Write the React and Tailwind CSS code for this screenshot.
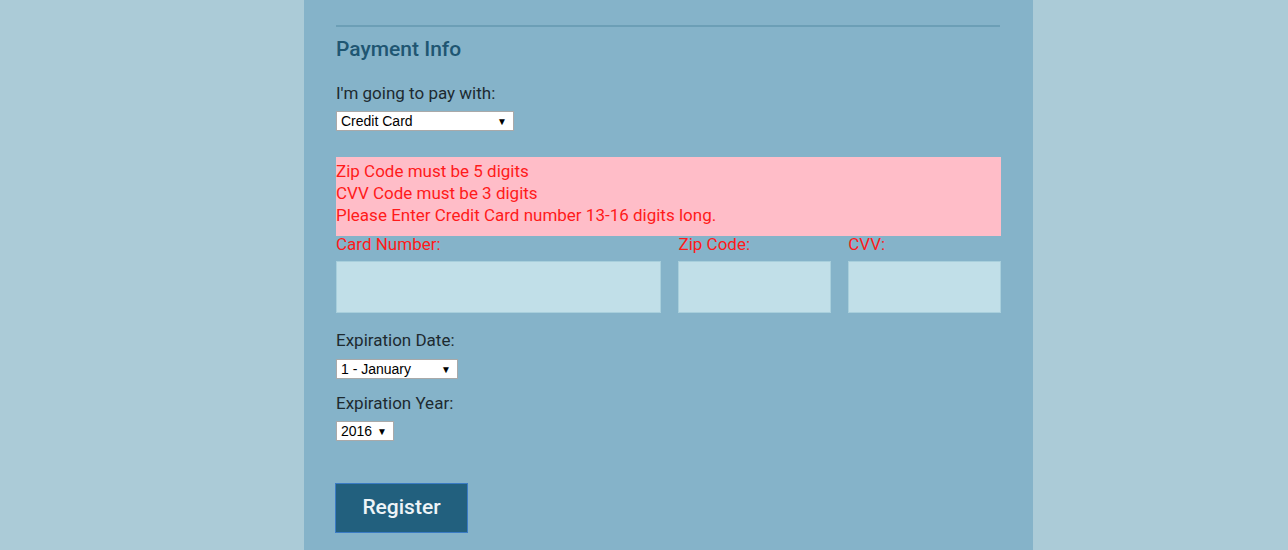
import React from "react";

function FakeSelect({ value, width }) {
  return (
    <div
      className={`${width} h-[20px] bg-white border border-[#a9a9a9] flex items-center justify-between pl-[4px] pr-[6px] text-[14px] text-black`}
      style={{ fontFamily: '"Liberation Sans", Arial, sans-serif' }}
    >
      <span>{value}</span>
      <span className="text-[10px]">▼</span>
    </div>
  );
}

export default function App() {
  return (
    <div
      className="min-h-screen bg-[#abcbd7] flex"
      style={{ fontFamily: "Roboto, sans-serif" }}
    >
      <div className="ml-[304px] w-[729px] h-[550px] bg-[#85b3c9] px-[32px] pt-[25px]">
        <hr className="w-[664px] border-0 border-t-2 border-[#6c9fb6]" />

        {/* Payment Info */}
        <h2 className="mt-[8px] text-[21px] leading-[28px] font-medium text-[#1f5672]">
          Payment Info
        </h2>

        <label className="block mt-[19px] text-[17px] leading-[22px] text-[#1d2a30]">
          I'm going to pay with:
        </label>
        <div className="mt-[7px]">
          <FakeSelect value="Credit Card" width="w-[178px]" />
        </div>

        <div className="mt-[26px] w-[665px] bg-[#ffbdc8] pt-[3px] pb-[10px] text-[17px] leading-[22px] text-[#ff1a1a]">
          <div>Zip Code must be 5 digits</div>
          <div>CVV Code must be 3 digits</div>
          <div>Please Enter Credit Card number 13-16 digits long.</div>
        </div>

        <div className="flex gap-[17px] w-[665px]">
          <div className="w-[326px]">
            <label className="block text-[17px] leading-[16px] text-[#ff1a1a]">Card Number:</label>
            <div className="mt-[9px] h-[52px] bg-[#c1dfe8] border border-[#a8cfdc]" />
          </div>
          <div className="w-[153px]">
            <label className="block text-[17px] leading-[16px] text-[#ff1a1a]">Zip Code:</label>
            <div className="mt-[9px] h-[52px] bg-[#c1dfe8] border border-[#a8cfdc]" />
          </div>
          <div className="w-[153px]">
            <label className="block text-[17px] leading-[16px] text-[#ff1a1a]">CVV:</label>
            <div className="mt-[9px] h-[52px] bg-[#c1dfe8] border border-[#a8cfdc]" />
          </div>
        </div>

        <label className="block mt-[16px] text-[17px] leading-[22px] text-[#1d2a30]">
          Expiration Date:
        </label>
        <div className="mt-[8px]">
          <FakeSelect value="1 - January" width="w-[122px]" />
        </div>

        <label className="block mt-[13px] text-[17px] leading-[22px] text-[#1d2a30]">
          Expiration Year:
        </label>
        <div className="mt-[7px]">
          <FakeSelect value="2016" width="w-[58px]" />
        </div>

        <button className="mt-[42px] -ml-px w-[133px] h-[50px] bg-[#22607e] border border-[#3a7bc4] text-[21px] font-medium text-[#eef4f7]">
          Register
        </button>
      </div>
    </div>
  );
}
